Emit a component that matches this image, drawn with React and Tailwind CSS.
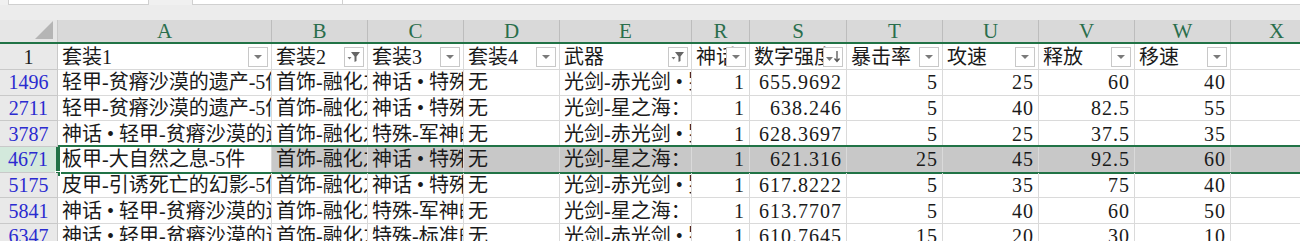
import React from 'react';

const cols = [
  { key: 'A', w: 214, title: '套装1', icon: 'drop' },
  { key: 'B', w: 96, title: '套装2', icon: 'filter' },
  { key: 'C', w: 96, title: '套装3', icon: 'drop' },
  { key: 'D', w: 96, title: '套装4', icon: 'drop' },
  { key: 'E', w: 132, title: '武器', icon: 'filter' },
  { key: 'R', w: 58, title: '神话', icon: 'drop', num: true },
  { key: 'S', w: 97, title: '数字强度', icon: 'sort', num: true },
  { key: 'T', w: 96, title: '暴击率', icon: 'drop', num: true },
  { key: 'U', w: 96, title: '攻速', icon: 'drop', num: true },
  { key: 'V', w: 96, title: '释放', icon: 'drop', num: true },
  { key: 'W', w: 96, title: '移速', icon: 'drop', num: true },
];

const rows = [
  ['1496', '轻甲-贫瘠沙漠的遗产-5件', '首饰-融化之恶-3件', '神话 • 特殊-守护者', '无', '光剑-赤光剑 • 罗什', '1', '655.9692', '5', '25', '60', '40'],
  ['2711', '轻甲-贫瘠沙漠的遗产-5件', '首饰-融化之恶-3件', '神话 • 特殊-守护者', '无', '光剑-星之海：巴德纳尔', '1', '638.246', '5', '40', '82.5', '55'],
  ['3787', '神话 • 轻甲-贫瘠沙漠的遗产', '首饰-融化之恶-3件', '特殊-军神的隐秘', '无', '光剑-赤光剑 • 罗什', '1', '628.3697', '5', '25', '37.5', '35'],
  ['4671', '板甲-大自然之息-5件', '首饰-融化之恶-3件', '神话 • 特殊-守护者', '无', '光剑-星之海：巴德纳尔', '1', '621.316', '25', '45', '92.5', '60'],
  ['5175', '皮甲-引诱死亡的幻影-5件', '首饰-融化之恶-3件', '神话 • 特殊-守护者', '无', '光剑-赤光剑 • 罗什', '1', '617.8222', '5', '35', '75', '40'],
  ['5841', '神话 • 轻甲-贫瘠沙漠的遗产', '首饰-融化之恶-3件', '特殊-军神的隐秘', '无', '光剑-星之海：巴德纳尔', '1', '613.7707', '5', '40', '60', '50'],
  ['6347', '神话 • 轻甲-贫瘠沙漠的遗产', '首饰-融化之恶-3件', '特殊-标准的遗产', '无', '光剑-赤光剑 • 罗什', '1', '610.7645', '15', '20', '30', '10'],
];

const font = { fontFamily: '"Liberation Serif", "Noto Sans CJK SC", serif' };

const FilterBtn = ({ icon }) => (
  <span className="absolute right-[3px] top-[3px] w-[20px] h-[20px] bg-white border border-[#c8c8c8] flex items-center justify-center">
    {icon === 'drop' && (
      <svg width="10" height="6" viewBox="0 0 10 6"><path d="M1 1h8L5 5z" fill="#7a7a7a" /></svg>
    )}
    {icon === 'filter' && (
      <svg width="14" height="12" viewBox="0 0 14 12">
        <path d="M4 1h9L9.5 5.5V10L7.5 11V5.5z" fill="#666" />
        <path d="M0.5 6h4L2.5 8.5z" fill="#7a7a7a" />
      </svg>
    )}
    {icon === 'sort' && (
      <svg width="16" height="14" viewBox="0 0 16 14">
        <path d="M1 7h7L4.5 11z" fill="#7a7a7a" />
        <path d="M12 1v10M9.5 8.5L12 11.5l2.5-3" stroke="#555" strokeWidth="1.3" fill="none" />
      </svg>
    )}
  </span>
);

export default function App() {
  return (
    <div className="w-[1300px] h-[241px] overflow-hidden bg-white text-[#1a1a1a]" style={font}>
      {/* formula bar strip */}
      <div className="h-[5px] bg-[#f0f0f0] flex">
        <div className="ml-[8px] w-[141px] bg-white border-b border-x border-[#d0d0d0]" />
        <div className="ml-[43px] w-[151px] bg-white border-b border-x border-[#d0d0d0]" />
        <div className="flex-1 bg-white border-b border-[#d0d0d0]" />
      </div>
      <div className="h-[15px] bg-[#ececec]" />

      {/* column letters */}
      <div className="flex h-[24px] border-b-2 border-[#217346] bg-[#d9d9d9]">
        <div className="w-[58px] shrink-0 bg-[#e6e6e6] relative border-r border-[#c9c9c9]">
          <svg className="absolute right-[4px] bottom-[3px]" width="18" height="18" viewBox="0 0 18 18">
            <path d="M18 0V18H0z" fill="#b5b5b5" />
          </svg>
        </div>
        {cols.map((c) => (
          <div
            key={c.key}
            className="shrink-0 border-r border-[#bdbdbd] flex items-center justify-center text-[21px] text-[#2a6e4c] leading-none"
            style={{ width: c.w }}
          >
            {c.key}
          </div>
        ))}
        <div className="flex-1 flex items-center pl-[38px] text-[21px] text-[#2a6e4c] leading-none">X</div>
      </div>

      {/* header row */}
      <div className="flex h-[26px]">
        <div className="w-[58px] shrink-0 bg-[#e9e9e9] border-r border-b border-[#c9c9c9] flex items-center justify-center text-[20px]">1</div>
        {cols.map((c) => (
          <div
            key={c.key}
            className="relative shrink-0 border-r border-b border-[#d9d9d9] flex items-center pl-[4px] text-[20px] whitespace-nowrap overflow-hidden"
            style={{ width: c.w }}
          >
            {c.title}
            <FilterBtn icon={c.icon} />
          </div>
        ))}
        <div className="flex-1 border-b border-[#d9d9d9]" />
      </div>

      {/* data rows */}
      {rows.map((r) => {
        const sel = r[0] === '4671';
        return (
          <div key={r[0]} className={`relative flex h-[25.7px] ${sel ? 'bg-[#c8c8c8]' : ''}`}>
            <div
              className={`w-[58px] shrink-0 border-r border-b border-[#c9c9c9] flex items-center justify-center text-[20px] text-[#2b2bd0] ${sel ? 'bg-[#d3e9dc] border-r-2 border-r-[#217346]' : 'bg-[#e9e9e9]'}`}
            >
              {r[0]}
            </div>
            {cols.map((c, i) => (
              <div
                key={c.key}
                className={`shrink-0 border-r border-b border-[#dadada] flex items-center px-[4px] text-[20px] whitespace-nowrap overflow-hidden ${c.num ? 'justify-end tracking-[1px]' : ''} ${sel && i === 0 ? 'bg-white' : ''}`}
                style={{ width: c.w }}
              >
                {r[i + 1]}
              </div>
            ))}
            <div className="flex-1 border-b border-[#dadada]" />
            {sel && (
              <>
                <div className="absolute left-[58px] right-0 -top-[2px] -bottom-[1px] border-y-2 border-l-2 border-[#217346] pointer-events-none" />
                <div className="absolute left-[55px] -bottom-[4px] w-[6px] h-[6px] bg-[#217346] border border-white" />
              </>
            )}
          </div>
        );
      })}
    </div>
  );
}
